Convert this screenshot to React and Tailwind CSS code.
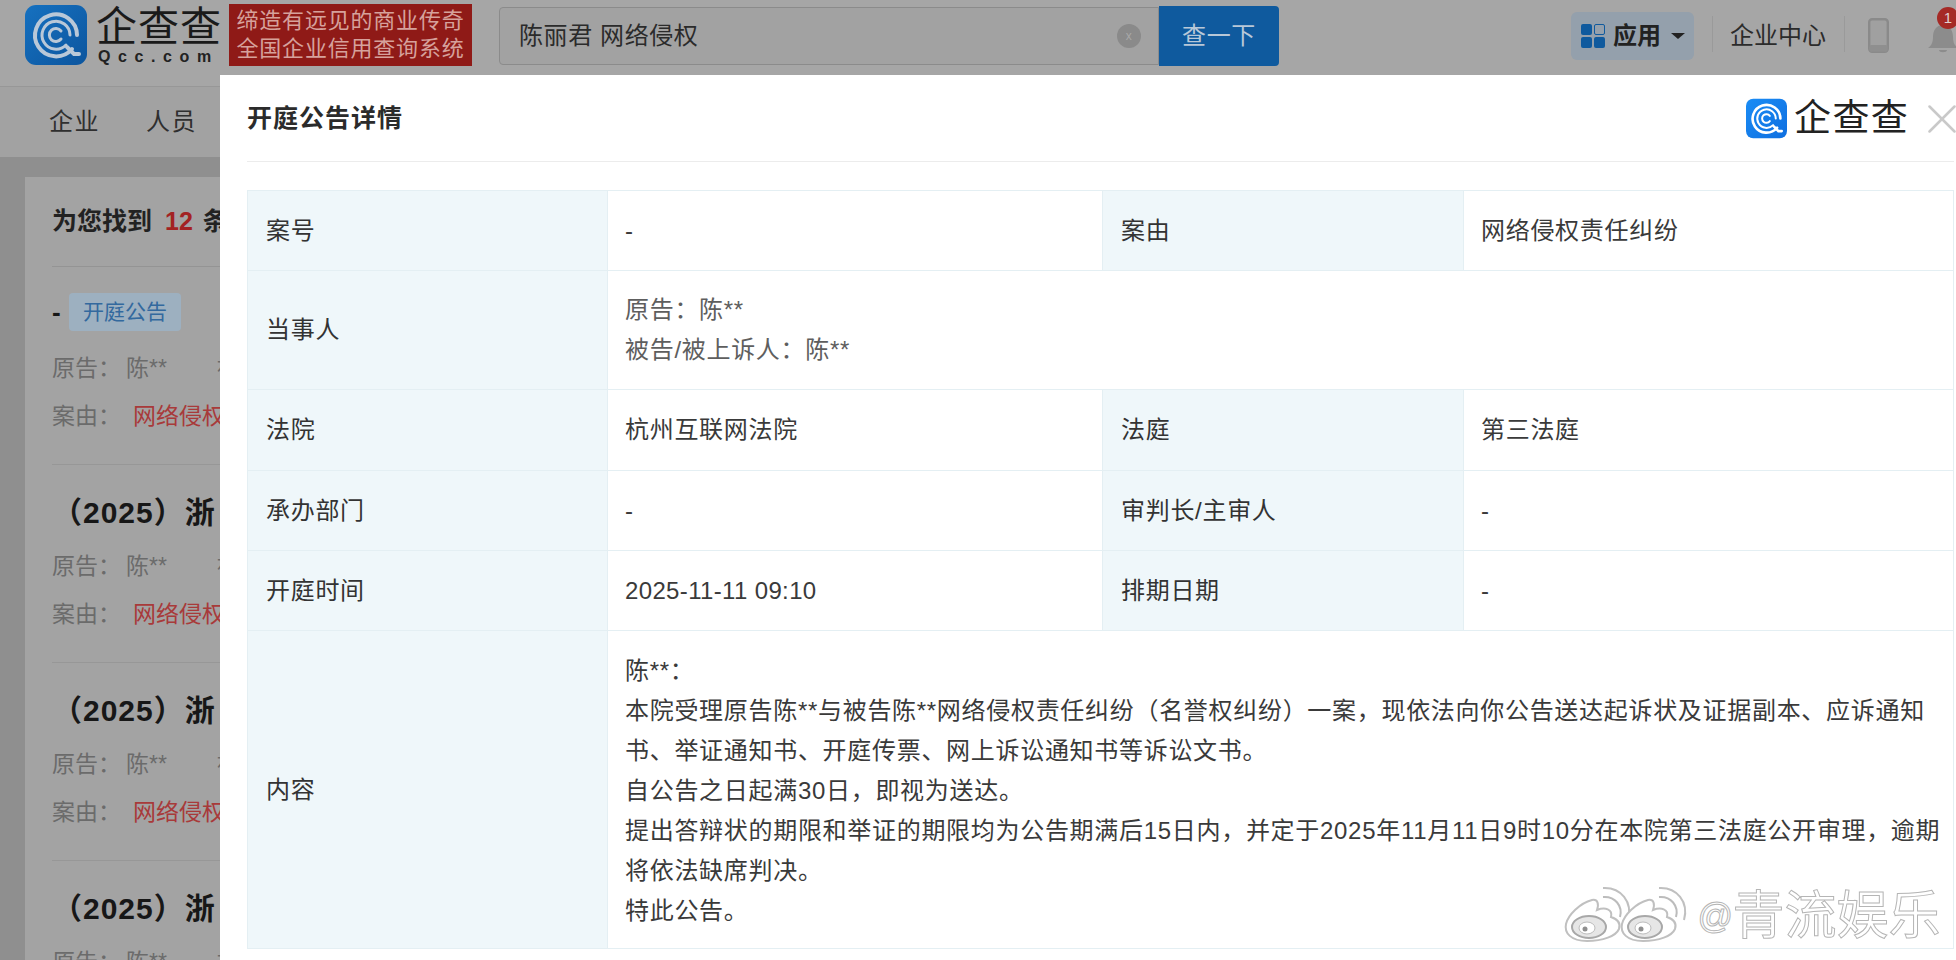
import React from 'react'
import { X } from 'lucide-react'

const FONT = "font-['Liberation_Sans','Noto_Sans_CJK_SC',sans-serif]"

// blue square with the concentric "C" rings and a little tail
function QccMark({ className, dark }) {
  const ring = dark ? '#b9c8d8' : '#ffffff'
  return (
    <svg viewBox="0 0 62 60" className={className}>
      <defs>
        <linearGradient id={dark ? 'qd' : 'ql'} x1="0" y1="0" x2="1" y2="1">
          <stop offset="0" stopColor={dark ? '#1671c0' : '#1a8cf5'} />
          <stop offset="1" stopColor={dark ? '#0c559e' : '#0f6fe0'} />
        </linearGradient>
      </defs>
      <rect width="62" height="60" rx="11" fill={`url(#${dark ? 'qd' : 'ql'})`} />
      <g fill="none" stroke={ring} strokeLinecap="round">
        <path d="M47 44 A21 21 0 1 1 52 30" strokeWidth="4" />
        <path d="M41 40 A14 14 0 1 1 45 30" strokeWidth="3" />
        <path d="M36 34 A6.5 6.5 0 1 1 36 26" strokeWidth="3" />
        <path d="M42 42 L49 49 L54 49" strokeWidth="4" />
      </g>
    </svg>
  )
}

// one weibo eye for the watermark
function WeiboEye({ x }) {
  return (
    <g transform={`translate(${x} 0)`}>
      <path d="M24 55 C8 55 1 47 3 38 C5 29 17 17 29 14 C35 13 36 18 34 24 C42 21 50 23 48 31 C54 33 58 37 56 43 C53 50 40 55 24 55 Z" fill="#fff" stroke="#c0c0c0" strokeWidth="2" />
      <ellipse cx="26" cy="41" rx="17" ry="11" fill="#e6e6e6" stroke="#a8a8a8" strokeWidth="2" />
      <ellipse cx="24" cy="42" rx="8" ry="6" fill="#fff" stroke="#bcbcbc" />
      <circle cx="22" cy="43" r="2.5" fill="#8f8f8f" />
      <path d="M40 11 C52 10 60 20 57 31" fill="none" stroke="#fff" strokeWidth="6" />
      <path d="M40 11 C52 10 60 20 57 31" fill="none" stroke="#bcbcbc" strokeWidth="2" />
      <path d="M40 2 C58 1 70 16 65 34" fill="none" stroke="#c0c0c0" strokeWidth="2" />
    </g>
  )
}

function Header() {
  return (
    <div className="flex h-[87px] shrink-0 items-start border-b border-[#979797] bg-[#a6a6a6] pl-[25px]">
      <QccMark dark className="mt-[5px] h-[60px] w-[62px] shrink-0" />
      <div className="ml-[9px] mt-[5px] w-[127px] shrink-0">
        <div className="h-[44px] text-[41px] leading-[44px] tracking-[1px] text-[#1a1a1a] whitespace-nowrap">企查查</div>
        <div className="pl-[2px] text-[16px] font-bold leading-[16px] tracking-[7.6px] text-[#222] whitespace-nowrap">Qcc.com</div>
      </div>
      <div className="ml-[6px] mt-[4px] flex h-[62px] w-[243px] shrink-0 flex-col items-center justify-center bg-[#8f1a17] text-[22px] leading-[28px] tracking-[0.8px] text-[#d6a19c] whitespace-nowrap">
        <div>缔造有远见的商业传奇</div>
        <div>全国企业信用查询系统</div>
      </div>
      <div className="ml-[27px] mt-[7px] flex h-[58px] w-[660px] shrink-0 items-center justify-between rounded-l-[4px] border border-[#8b8b8b] bg-[#a2a2a2] pl-[19px] pr-[17px] text-[24px] tracking-[0.6px] text-[#2b2b2b]">
        <span>陈丽君 网络侵权</span>
        <span className="flex h-[24px] w-[24px] items-center justify-center rounded-full bg-[#8a8a8a] text-[12px] text-[#a8a8a8]">x</span>
      </div>
      <div className="mt-[6px] flex h-[60px] w-[120px] shrink-0 items-center justify-center rounded-r-[4px] bg-[#0f5a9e] text-[24px] tracking-[0.6px] text-[#b8c8d8]">查一下</div>
      <div className="ml-[292px] mt-[12px] flex h-[48px] w-[123px] shrink-0 items-center rounded-[6px] bg-[#94a0ac] pl-[10px]">
        <div className="grid grid-cols-2 gap-[2px]">
          <span className="h-[11px] w-[11px] rounded-[2px] bg-[#0f5a9e]" />
          <span className="h-[11px] w-[11px] rounded-[2px] border border-[#0f5a9e]" />
          <span className="h-[11px] w-[11px] rounded-[2px] bg-[#0f5a9e]" />
          <span className="h-[11px] w-[11px] rounded-[2px] bg-[#0f5a9e]" />
        </div>
        <span className="ml-[8px] text-[24px] font-bold text-[#222] whitespace-nowrap">应用</span>
        <svg viewBox="0 0 14 6" className="ml-[10px] h-[6px] w-[14px]"><path d="M0 0H14L7 6Z" fill="#222" /></svg>
      </div>
      <div className="ml-[18px] mt-[16px] h-[36px] w-px shrink-0 bg-[#9a9a9a]" />
      <div className="ml-[17px] mt-[14px] shrink-0 text-[24px] leading-[44px] text-[#2b2b2b] whitespace-nowrap">企业中心</div>
      <div className="ml-[18px] mt-[16px] h-[36px] w-px shrink-0 bg-[#9a9a9a]" />
      <svg viewBox="0 0 21 35" className="ml-[23px] mt-[18px] h-[35px] w-[21px] shrink-0">
        <rect x="1.2" y="1.2" width="18.6" height="32.6" rx="3" fill="#a0a0a0" stroke="#8a8a8a" strokeWidth="2.4" />
        <rect x="1.2" y="27" width="18.6" height="6.8" rx="2" fill="#8f8f8f" />
      </svg>
      <div className="relative ml-[39px] mt-[24px] h-[30px] w-[30px] shrink-0">
        <svg viewBox="0 0 30 30" className="h-[30px] w-[30px]"><path d="M15 1C8 1 5 7 5 13C5 19 3 22 0 24H30C27 22 25 19 25 13C25 7 22 1 15 1ZM11 26C11 29 19 29 19 26Z" fill="#8c8c8c" /></svg>
        <span className="absolute -top-[17px] left-[9px] flex h-[22px] w-[22px] items-center justify-center rounded-full bg-[#a52a26] text-[15px] text-[#e0d0d0]">1</span>
      </div>
    </div>
  )
}

function ResultRows({ className = 'mt-[9px]' }) {
  return (
    <>
      <div className={`${className} flex h-[48px] items-center text-[23px] text-[#6b6b6b] whitespace-nowrap`}>
        <span className="w-[74px]">原告：</span>
        <span>陈**</span>
        <span className="ml-[50px]">被</span>
      </div>
      <div className="flex h-[48px] items-center text-[23px] text-[#6b6b6b] whitespace-nowrap">
        <span className="w-[81px]">案由：</span>
        <span className="text-[#a83a3a]">网络侵权</span>
      </div>
    </>
  )
}

function ResultItem() {
  return (
    <div className="h-[198px] border-b border-[#979797] pt-[28px]">
      <div className="h-[40px] text-[30px] font-bold leading-[40px] tracking-[1px] text-[#171717] whitespace-nowrap">（2025）浙</div>
      <ResultRows />
    </div>
  )
}

function ResultList() {
  return (
    <div className="w-[220px] flex-1 overflow-hidden pl-[25px] pt-[19px]">
      <div className="h-[800px] w-[400px] bg-[#a3a3a3] pl-[27px]">
        <div className="flex h-[90px] items-center border-b border-[#949494] text-[25px] font-bold text-[#222] whitespace-nowrap">
          为您找到<span className="ml-[13px] mr-[10px] text-[#a32222]">12</span>条
        </div>
        <div className="h-[198px] border-b border-[#979797] pt-[25px]">
          <div className="flex h-[40px] items-center whitespace-nowrap">
            <span className="w-[17px] text-[26px] font-bold text-[#171717]">-</span>
            <span className="flex h-[38px] w-[112px] items-center justify-center rounded-[4px] bg-[#9db0c0] text-[21px] text-[#33699e]">开庭公告</span>
          </div>
          <ResultRows className="mt-[12px]" />
        </div>
        <ResultItem />
        <ResultItem />
        <ResultItem />
      </div>
    </div>
  )
}

const Th = ({ children }) => (
  <th className="border border-[#e4eff3] bg-[#eff7fa] pl-[18px] text-left font-normal text-[#333]">{children}</th>
)
const Td = ({ children, span, className = '' }) => (
  <td colSpan={span} className={`border border-[#e4eff3] px-[17px] text-[#3a3a3a] whitespace-nowrap ${className}`}>{children}</td>
)

function DetailModal() {
  return (
    <div className="absolute left-[220px] top-[75px] h-[900px] w-[1760px] bg-white pl-[27px] pr-[26px]">
      <div className="flex h-[87px] items-center justify-between border-b border-[#ececec] pt-[1px]">
        <div className="text-[25px] font-bold tracking-[1px] text-[#2b2b2b] whitespace-nowrap">开庭公告详情</div>
        <div className="flex items-center">
          <QccMark className="h-[41px] w-[41px]" />
          <span className="ml-[7px] text-[37px] leading-[41px] tracking-[1.3px] text-[#222] whitespace-nowrap">企查查</span>
          <X className="-mr-[13px] ml-[8px] h-[50px] w-[50px] text-[#c9c9c9]" strokeWidth={1.2} />
        </div>
      </div>
      <table className="mt-[28px] w-full table-fixed border-collapse text-[24px] leading-[40px] tracking-[0.7px]">
        <colgroup>
          <col className="w-[360px]" />
          <col className="w-[495px]" />
          <col className="w-[361px]" />
          <col />
        </colgroup>
        <tbody>
          <tr className="h-[80px]"><Th>案号</Th><Td>-</Td><Th>案由</Th><Td>网络侵权责任纠纷</Td></tr>
          <tr className="h-[119px]">
            <Th>当事人</Th>
            <Td span={3}>
              <div className="text-[#5e5e5e]">原告：陈**</div>
              <div className="text-[#5e5e5e]">被告/被上诉人：陈**</div>
            </Td>
          </tr>
          <tr className="h-[81px]"><Th>法院</Th><Td>杭州互联网法院</Td><Th>法庭</Th><Td>第三法庭</Td></tr>
          <tr className="h-[80px]"><Th>承办部门</Th><Td>-</Td><Th>审判长/主审人</Th><Td>-</Td></tr>
          <tr className="h-[80px]"><Th>开庭时间</Th><Td className="tracking-[0.35px]">2025-11-11 09:10</Td><Th>排期日期</Th><Td>-</Td></tr>
          <tr className="h-[318px]">
            <Th>内容</Th>
            <Td span={3} className="pt-[2px]">
              <div>陈**：</div>
              <div>本院受理原告陈**与被告陈**网络侵权责任纠纷（名誉权纠纷）一案，现依法向你公告送达起诉状及证据副本、应诉通知</div>
              <div>书、举证通知书、开庭传票、网上诉讼通知书等诉讼文书。</div>
              <div>自公告之日起满30日，即视为送达。</div>
              <div>提出答辩状的期限和举证的期限均为公告期满后15日内，并定于2025年11月11日9时10分在本院第三法庭公开审理，逾期</div>
              <div>将依法缺席判决。</div>
              <div>特此公告。</div>
            </Td>
          </tr>
        </tbody>
      </table>
    </div>
  )
}

function Watermark() {
  return (
    <div className="absolute left-[1563px] top-[883px] flex items-center">
      <svg viewBox="0 0 134 58" className="h-[58px] w-[134px]">
        <WeiboEye x={0} />
        <WeiboEye x={56} />
      </svg>
      <span className="mt-[3px] text-[35px] italic leading-[60px] text-white whitespace-nowrap [-webkit-text-stroke:1px_#b5b5b5]">@</span>
      <span className="mt-[3px] text-[52px] leading-[60px] text-white whitespace-nowrap [-webkit-text-stroke:1px_#b5b5b5]">青流娱乐</span>
    </div>
  )
}

export default function App() {
  return (
    <div className={`${FONT} relative flex h-[960px] w-[1956px] flex-col overflow-hidden bg-[#8f8f8f]`}>
      <Header />
      <div className="flex h-[71px] shrink-0 items-center border-b border-[#8f8f8f] bg-[#a2a2a2] pl-[49px] text-[24px] tracking-[1.5px] text-[#2f2f2f] whitespace-nowrap">
        <span>企业</span>
        <span className="ml-[46px]">人员</span>
      </div>
      <ResultList />
      <DetailModal />
      <Watermark />
    </div>
  )
}
